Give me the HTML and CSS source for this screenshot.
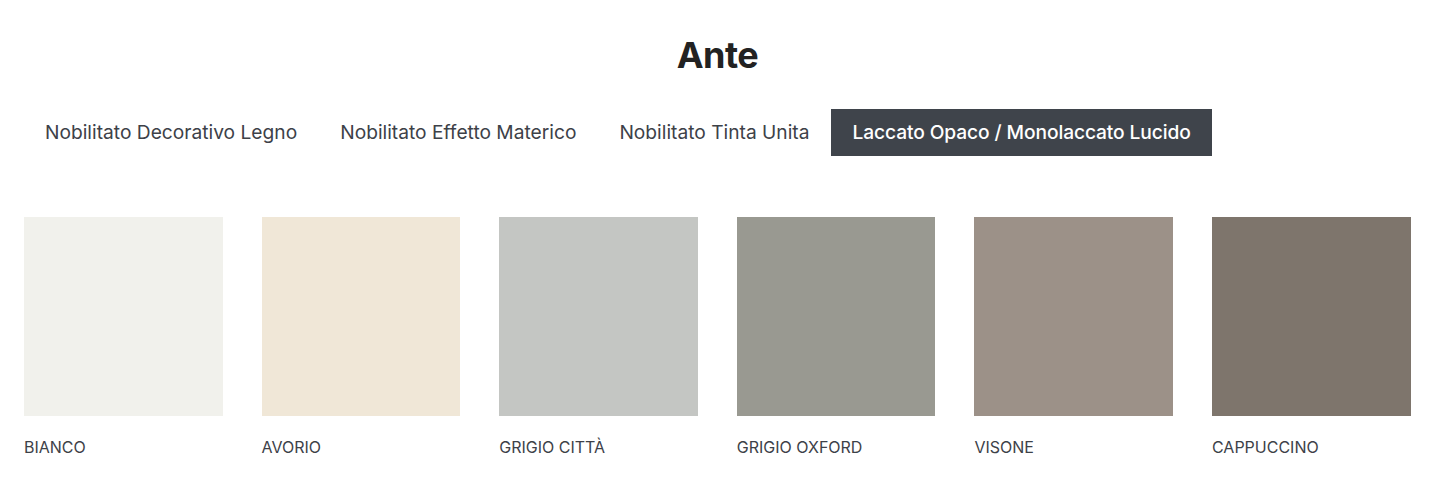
FILE: index.html
```html
<!DOCTYPE html>
<html lang="it">
<head>
<meta charset="utf-8">
<title>Ante</title>
<link rel="stylesheet" href="styles.css">
</head>
<body>
<main class="section">
  <h2 class="title">Ante</h2>
  <nav class="tabs">
    <span class="tab">Nobilitato Decorativo Legno</span>
    <span class="tab">Nobilitato Effetto Materico</span>
    <span class="tab">Nobilitato Tinta Unita</span>
    <span class="tab active">Laccato Opaco / Monolaccato Lucido</span>
  </nav>
  <div class="grid">
    <div class="item"><div class="swatch" style="background:#f1f1ec"></div><p class="label">BIANCO</p></div>
    <div class="item"><div class="swatch" style="background:#f0e7d7"></div><p class="label">AVORIO</p></div>
    <div class="item"><div class="swatch" style="background:#c4c6c3"></div><p class="label">GRIGIO CITTÀ</p></div>
    <div class="item"><div class="swatch" style="background:#999991"></div><p class="label">GRIGIO OXFORD</p></div>
    <div class="item"><div class="swatch" style="background:#9c9188"></div><p class="label">VISONE</p></div>
    <div class="item"><div class="swatch" style="background:#7e756c"></div><p class="label">CAPPUCCINO</p></div>
  </div>
</main>
</body>
</html>
```
FILE: styles.css
```css
html, body {
  margin: 0;
  padding: 0;
  background: #fff;
}
body {
  font-family: Inter, "Noto Sans", "Liberation Sans", sans-serif;
  color: #3d4148;
}
.section {
  padding: 32px 24px 0 24px;
}
.title {
  margin: 0;
  padding-right: 6px;
  text-align: center;
  font-size: 36px;
  font-weight: 700;
  line-height: 46px;
  color: #222;
  letter-spacing: -0.5px;
}
.tabs {
  display: flex;
  margin-top: 31px;
}
.tab {
  display: block;
  padding: 0 21.5px;
  height: 47px;
  line-height: 47px;
  font-size: 19.2px;
  color: #3d4148;
  white-space: nowrap;
}
.tab:first-child {
  padding-left: 21px;
}
.active {
  background: #3f444b;
  color: #fff;
  font-weight: 500;
  letter-spacing: -0.1px;
}
.grid {
  display: grid;
  grid-template-columns: repeat(6, 198.6px);
  column-gap: 39px;
  margin-top: 61px;
}
.swatch {
  width: 100%;
  aspect-ratio: 1 / 1;
}
.label {
  margin: 22px 0 0 0;
  font-size: 16px;
  line-height: 19px;
  color: #3d4148;
}
```
